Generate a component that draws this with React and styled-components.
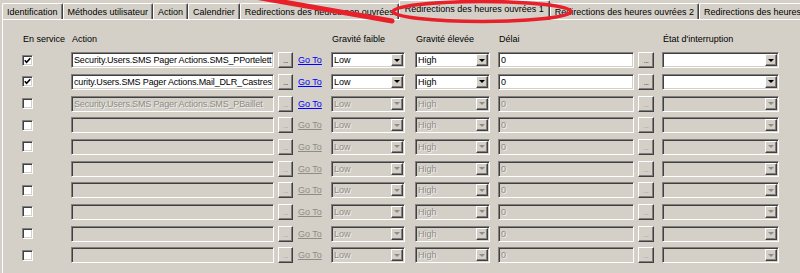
import React from 'react';
import styled, { createGlobalStyle, css } from 'styled-components';

const GlobalStyle = createGlobalStyle`
  html, body {
    margin: 0;
    padding: 0;
    background: #d4d0c8;
  }
  body {
    font-family: "Liberation Sans", Arial, sans-serif;
    font-size: 9px;
    color: #000;
    overflow: hidden;
  }
`;

// #region styles
const sunken = css`
  box-sizing: border-box;
  border: 1px solid;
  border-color: #808080 #fff #fff #808080;
  box-shadow: inset 1px 1px #404040, inset -1px -1px #d4d0c8;
`;

const raised = css`
  box-sizing: border-box;
  background: #d4d0c8;
  border: 1px solid;
  border-color: #fff #404040 #404040 #fff;
  box-shadow: inset -1px -1px #808080;
`;

const disabledText = css`
  color: #8e8c87;
  text-shadow: 1px 1px rgba(255, 255, 255, 0.7);
`;

const Window = styled.div`
  position: relative;
  width: 800px;
  height: 273px;
  overflow: hidden;
  padding-left: 2px;
  box-sizing: border-box;
`;

const TabStrip = styled.div`
  display: flex;
  align-items: flex-end;
  height: 19px;
  white-space: nowrap;
  position: relative;
  z-index: 1;
`;

const Tab = styled.div`
  flex: none;
  box-sizing: border-box;
  height: ${p => (p.$active ? 20 : 16)}px;
  margin-bottom: ${p => (p.$active ? -1 : 0)}px;
  padding: 0 ${p => (p.$active ? 5 : 4)}px;
  border-top: 1px solid #fff;
  border-left: 1px solid #fff;
  border-right: 1px solid #404040;
  border-radius: 2px 2px 0 0;
  box-shadow: inset -1px 0 #808080;
  background: #d4d0c8;
  line-height: ${p => (p.$active ? 16 : 16)}px;
`;

const Panel = styled.div`
  height: 260px;
  border-top: 1px solid #fff;
  border-left: 1px solid #fff;
  padding: 12px 0 0 19px;
  box-sizing: border-box;
`;

const Grid = styled.div`
  display: grid;
  grid-template-columns: 49px 207px 20px 33px 84px 83px 140px 24px 117px;
  grid-template-rows: 14.6px;
  grid-auto-rows: 16px;
  row-gap: 5.67px;
  align-items: center;
  justify-items: start;
`;

const Header = styled.div`
  padding-left: 1px;
  white-space: nowrap;
  line-height: 12px;
`;

const Check = styled.span`
  ${sunken};
  display: flex;
  align-items: center;
  justify-content: center;
  width: 11px;
  height: 11px;
  background: #fff;
`;

const TextBox = styled.div`
  ${sunken};
  width: ${p => p.$w}px;
  height: 16px;
  padding: 0 2px;
  line-height: 14px;
  letter-spacing: -0.15px;
  overflow: hidden;
  white-space: nowrap;
  background: ${p => (p.$disabled ? '#d4d0c8' : '#fff')};
  ${p => p.$disabled && disabledText};
`;

const DotsButton = styled.span`
  ${raised};
  width: ${p => p.$w}px;
  height: 16px;
  display: flex;
  align-items: flex-end;
  justify-content: center;
  padding-bottom: 2px;
  font-size: 8px;
  line-height: 8px;
  letter-spacing: -0.5px;
  color: ${p => (p.$disabled ? '#a3a19b' : '#404040')};
`;

const GoTo = styled.a`
  color: ${p => (p.$disabled ? '#8e8c87' : '#0000ff')};
  text-decoration: underline;
  white-space: nowrap;
  cursor: pointer;
`;

const Select = styled.div`
  ${sunken};
  display: flex;
  align-items: center;
  width: ${p => p.$w}px;
  height: 16px;
  padding: 1px;
  background: ${p => (p.$disabled ? '#d4d0c8' : '#fff')};
`;

const SelectText = styled.span`
  flex: 1;
  padding-left: 1px;
  line-height: 12px;
  overflow: hidden;
  white-space: nowrap;
  ${p => p.$disabled && disabledText};
`;

const ArrowButton = styled.span`
  ${raised};
  flex: none;
  width: 12px;
  height: 12px;
  display: flex;
  align-items: center;
  justify-content: center;

  &::after {
    content: '';
    width: 0;
    height: 0;
    border-left: 3px solid transparent;
    border-right: 3px solid transparent;
    border-top: 3px solid ${p => (p.$disabled ? '#8e8c87' : '#000')};
  }
`;

const Annotation = styled.svg`
  position: absolute;
  left: 0;
  top: 0;
  pointer-events: none;
  z-index: 5;
`;
// #endregion

const tabs = [
  'Identification',
  'Méthodes utilisateur',
  'Action',
  'Calendrier',
  'Redirections des heures non ouvrées',
  'Redirections des heures ouvrées 1',
  'Redirections des heures ouvrées 2',
  'Redirections des heures ouvrées 3',
];

const rows = [
  { checked: true, enabled: true, link: true, action: 'Security.Users.SMS Pager Actions.SMS_PPortelett' },
  { checked: true, enabled: true, link: true, action: 'curity.Users.SMS Pager Actions.Mail_DLR_Castres' },
  { checked: false, enabled: false, link: true, action: 'Security.Users.SMS Pager Actions.SMS_PBaillet' },
  ...Array.from({ length: 7 }, () => ({ checked: false, enabled: false, link: false, action: '' })),
];

const Dropdown = ({ w, value, disabled }) => (
  <Select $w={w} $disabled={disabled}>
    <SelectText $disabled={disabled}>{value}</SelectText>
    <ArrowButton $disabled={disabled} />
  </Select>
);

const CheckBox = ({ checked }) => (
  <Check>
    {checked && (
      <svg width="7" height="7" viewBox="0 0 7 7">
        <polyline points="0.8,3.2 2.6,5.2 6.3,1.2" fill="none" stroke="#000" strokeWidth="1.6" />
      </svg>
    )}
  </Check>
);

const App = () => (
  <Window>
    <GlobalStyle />
    <TabStrip>
      {tabs.map((t, i) => (
        <Tab key={t} $active={i === 5}>
          {t}
        </Tab>
      ))}
    </TabStrip>
    <Panel>
      <Grid>
        <Header>En service</Header>
        <Header>Action</Header>
        <span />
        <span />
        <Header>Gravité faible</Header>
        <Header>Gravité élevée</Header>
        <Header>Délai</Header>
        <span />
        <Header>État d'interruption</Header>

        {rows.map((r, i) => {
          const off = !r.enabled;
          return (
            <React.Fragment key={i}>
              <CheckBox checked={r.checked} />
              <TextBox $w={203} $disabled={off}>
                {r.action}
              </TextBox>
              <DotsButton $w={15} $disabled={off}>...</DotsButton>
              <GoTo $disabled={!r.link}>Go To</GoTo>
              <Dropdown w={74} value="Low" disabled={off} />
              <Dropdown w={75} value="High" disabled={off} />
              <TextBox $w={136} $disabled={off}>
                0
              </TextBox>
              <DotsButton $w={16} $disabled={off}>...</DotsButton>
              <Dropdown w={117} value="" disabled={off} />
            </React.Fragment>
          );
        })}
      </Grid>
    </Panel>
    <Annotation width="800" height="40" viewBox="0 0 800 40">
      <path d="M255 -3 L392 21" stroke="#e8202a" strokeWidth="5" strokeLinecap="round" fill="none" />
      <ellipse cx="482" cy="11.5" rx="89" ry="10" stroke="#e8202a" strokeWidth="3.5" fill="none" />
    </Annotation>
  </Window>
);

export default App;
